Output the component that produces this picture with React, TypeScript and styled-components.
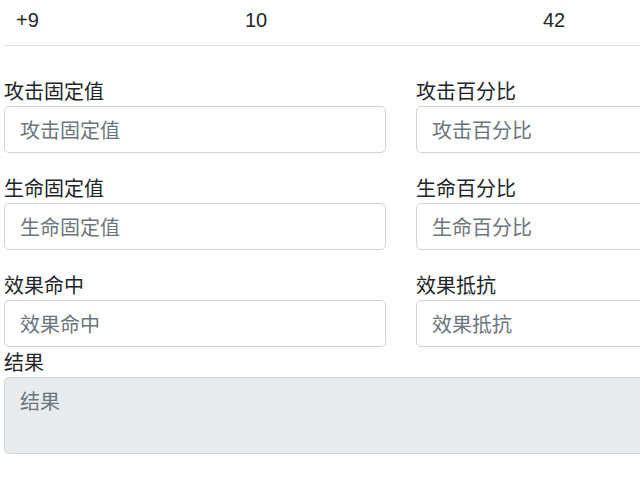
import React from "react";
import styled, { createGlobalStyle } from "styled-components";

const Global = createGlobalStyle`
  html { font-size: 20px; overflow: hidden; }
  body {
    margin: 0;
    overflow: hidden;
    font-family: "Liberation Sans", "Noto Sans CJK SC", sans-serif;
    font-size: 1rem;
    line-height: 1.5;
    color: #212529;
    background: #fff;
  }
  * { box-sizing: border-box; }
`;

const Page = styled.div`
  width: 798px;
  padding-left: 4px;
`;

const StatRow = styled.div`
  display: grid;
  grid-template-columns: 229px 298px 1fr;
  border-bottom: 1px solid #dee2e6;
  margin-bottom: 30px;
`;

const StatCell = styled.div`
  padding: 5px 12px 10px;
  line-height: 30px;
`;

const FormRow = styled.div<{ $last?: boolean }>`
  display: grid;
  grid-template-columns: 1fr 1fr;
  column-gap: 30px;
  margin-bottom: ${(p) => (p.$last ? "0" : "20px")};
`;

const Field = styled.div`
  display: flex;
  flex-direction: column;
`;

const Label = styled.label`
  display: block;
  line-height: 30px;
  font-family: "Noto Sans CJK SC", sans-serif;
`;

const Input = styled.input`
  display: block;
  width: 100%;
  height: 47px;
  padding: 7.5px 15px;
  font-size: 1rem;
  line-height: 1.5;
  font-family: "Noto Sans CJK SC", sans-serif;
  color: #495057;
  background: #fff;
  border: 1px solid #ced4da;
  border-radius: 5px;
  outline: none;
  &::placeholder { color: #6c757d; opacity: 1; }
`;

const TextArea = styled.textarea`
  display: block;
  width: 100%;
  height: 77px;
  padding: 7.5px 15px;
  font-size: 1rem;
  line-height: 1.5;
  font-family: "Noto Sans CJK SC", sans-serif;
  color: #495057;
  background: #e9ecef;
  border: 1px solid #ced4da;
  border-radius: 5px;
  resize: none;
  outline: none;
  &::placeholder { color: #6c757d; opacity: 1; }
`;

const rows: [string, string][] = [
  ["攻击固定值", "攻击百分比"],
  ["生命固定值", "生命百分比"],
  ["效果命中", "效果抵抗"],
];

export default function App() {
  return (
    <>
      <Global />
      <Page>
        <StatRow>
          <StatCell>+9</StatCell>
          <StatCell>10</StatCell>
          <StatCell>42</StatCell>
        </StatRow>
        {rows.map((r, i) => (
          <FormRow key={i} $last={i === rows.length - 1}>
            {r.map((name) => (
              <Field key={name}>
                <Label>{name}</Label>
                <Input placeholder={name} />
              </Field>
            ))}
          </FormRow>
        ))}
        <Field>
          <Label>结果</Label>
          <TextArea placeholder="结果" readOnly rows={2} />
        </Field>
      </Page>
    </>
  );
}
